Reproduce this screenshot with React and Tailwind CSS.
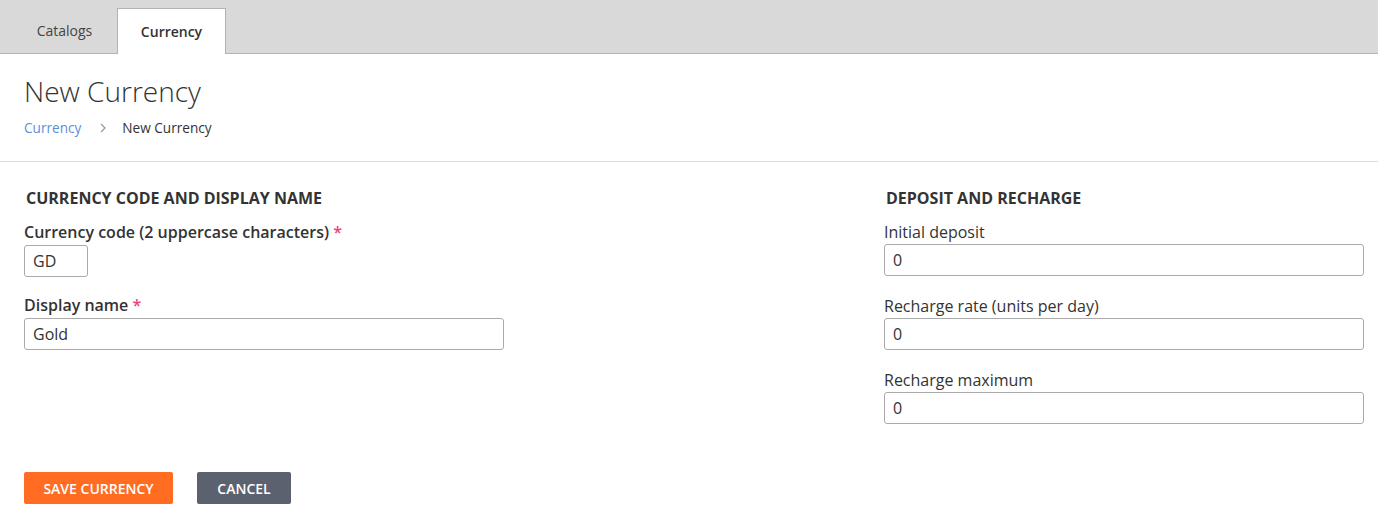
export default function App() {
  const font = { fontFamily: '"Open Sans", "Liberation Sans", sans-serif' };
  return (
    <div className="w-[1378px] h-[517px] bg-white text-[#333]" style={font}>
      <div className="h-[54px] bg-[#d9d9d9] border-b border-[#b3b3b3] flex items-end pl-[12px]">
        <div className="w-[105px] h-[45px] flex items-center justify-center text-[14px] text-[#444]">Catalogs</div>
        <div className="w-[109px] h-[46px] -mb-px bg-white border border-b-0 border-[#b3b3b3] flex items-center justify-center pb-[1px] text-[14px] font-semibold text-[#333]">Currency</div>
      </div>
      <div className="px-[24px] pt-[18px] pb-[23px] border-b border-[#dcdcdc]">
        <h1 className="text-[28px] font-light leading-[38px] text-[#333]">New Currency</h1>
        <div className="flex items-center mt-[8px] text-[13.6px] leading-[20px]">
          <span className="text-[#5b8fd9]">Currency</span>
          <svg className="ml-[18px] mr-[15px]" width="8" height="10" viewBox="0 0 8 10" fill="none" stroke="#999" strokeWidth="1.2"><path d="M2 1l4 4-4 4" /></svg>
          <span className="text-[#333]">New Currency</span>
        </div>
      </div>
      <div className="flex pl-[24px] pt-[25px]">
        <div className="w-[860px]">
          <h2 className="text-[16px] font-bold leading-[22px] ml-[2px] text-[#333]">CURRENCY CODE AND DISPLAY NAME</h2>
          <label className="block mt-[12px] text-[16px] font-semibold leading-[22px]">Currency code (2 uppercase characters) <span className="text-[#e8457a]">*</span></label>
          <div className="mt-[2px] w-[64px] h-[32px] border border-[#aaa] rounded-[3px] px-[8px] flex items-center text-[16px]">GD</div>
          <label className="block mt-[17px] text-[16px] font-semibold leading-[22px]">Display name <span className="text-[#e8457a]">*</span></label>
          <div className="mt-[2px] w-[480px] h-[32px] border border-[#aaa] rounded-[3px] px-[8px] flex items-center text-[16px]">Gold</div>
        </div>
        <div className="w-[480px]">
          <h2 className="text-[16px] font-bold leading-[22px] ml-[2px] text-[#333]">DEPOSIT AND RECHARGE</h2>
          <Field label="Initial deposit" first />
          <Field label="Recharge rate (units per day)" />
          <Field label="Recharge maximum" />
        </div>
      </div>
      <div className="flex gap-[24px] pl-[24px] mt-[48px]">
        <button className="h-[32px] w-[149px] bg-[#ff6c22] text-white text-[14px] font-semibold rounded-[2px]">SAVE CURRENCY</button>
        <button className="h-[32px] w-[94px] bg-[#5c6170] text-white text-[14px] font-semibold rounded-[2px]">CANCEL</button>
      </div>
    </div>
  );
}

function Field({ label, first }) {
  return (
    <div className={first ? "mt-[12px]" : "mt-[19px]"}>
      <label className="block text-[16px] leading-[22px]">{label}</label>
      <div className="mt-px w-[480px] h-[32px] border border-[#aaa] rounded-[3px] px-[8px] flex items-center text-[16px]">0</div>
    </div>
  );
}
